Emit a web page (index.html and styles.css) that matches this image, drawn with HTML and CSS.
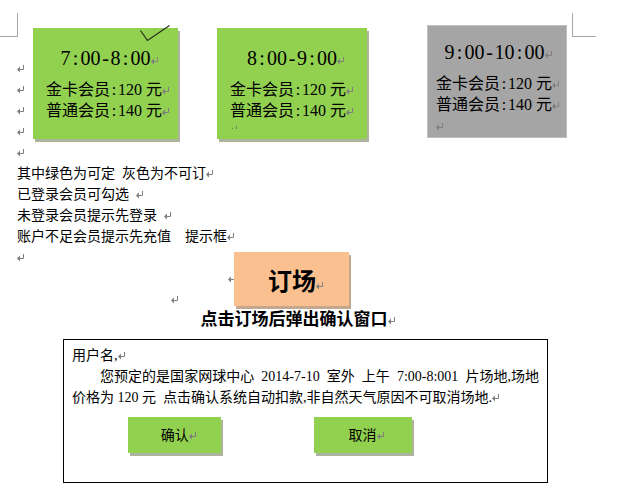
FILE: index.html
```html
<!DOCTYPE html>
<html lang="zh-CN">
<head>
<meta charset="utf-8">
<meta name="viewport" content="width=device-width, initial-scale=1">
<title>订场</title>
<link rel="stylesheet" href="styles.css">
</head>
<body>
<svg class="defs" aria-hidden="true">
  <symbol id="ret" viewBox="0 0 8 8"><path d="M6.5 0V4.5H1" fill="none" stroke="currentColor"/><path d="M0 4.5L3 1.5V7.5Z" fill="currentColor"/></symbol>
</svg>
<main class="page">
  <span class="corner corner-left"></span>
  <span class="corner corner-right"></span>

  <section class="slots">
    <div class="marks">
      <svg class="ret"><use href="#ret"/></svg>
      <svg class="ret"><use href="#ret"/></svg>
      <svg class="ret"><use href="#ret"/></svg>
      <svg class="ret"><use href="#ret"/></svg>
      <svg class="ret"><use href="#ret"/></svg>
    </div>
    <button type="button" class="slot slot-first" aria-pressed="true">
      <svg class="tick" viewBox="0 0 32 18"><path d="M1.5 5.5L8.5 15.5L30.5 0.5" fill="none" stroke="#262e1c" stroke-width="1.2"/></svg>
      <span class="time">7<i>:</i>00<i>-</i>8<i>:</i>00<svg class="ret"><use href="#ret"/></svg></span>
      <span class="price">金卡会员<i>:</i>120 元<svg class="ret"><use href="#ret"/></svg></span>
      <span class="price">普通会员<i>:</i>140 元<svg class="ret"><use href="#ret"/></svg></span>
    </button>
    <button type="button" class="slot slot-second" aria-pressed="false">
      <span class="time">8<i>:</i>00<i>-</i>9<i>:</i>00<svg class="ret"><use href="#ret"/></svg></span>
      <span class="price">金卡会员<i>:</i>120 元<svg class="ret"><use href="#ret"/></svg></span>
      <span class="price">普通会员<i>:</i>140 元<svg class="ret"><use href="#ret"/></svg></span>
      <svg class="clipped" viewBox="0 0 6 3"><path d="M0 2h1v1H0zM4 0h1v3H4z" fill="#6f8a52"/></svg>
    </button>
    <button type="button" class="slot slot-third" disabled>
      <span class="time">9<i>:</i>00<i>-</i>10<i>:</i>00<svg class="ret"><use href="#ret"/></svg></span>
      <span class="price">金卡会员<i>:</i>120 元<svg class="ret"><use href="#ret"/></svg></span>
      <span class="price">普通会员<i>:</i>140 元<svg class="ret"><use href="#ret"/></svg></span>
      <span class="price"><svg class="ret"><use href="#ret"/></svg></span>
    </button>
  </section>

  <section class="notes">
    <p>其中绿色为可定&nbsp; 灰色为不可订<svg class="ret"><use href="#ret"/></svg></p>
    <p>已登录会员可勾选&nbsp; <svg class="ret"><use href="#ret"/></svg></p>
    <p>未登录会员提示先登录&nbsp; <svg class="ret"><use href="#ret"/></svg></p>
    <p>账户不足会员提示先充值&nbsp;&nbsp;&nbsp; 提示框<svg class="ret"><use href="#ret"/></svg></p>
  </section>

  <section class="booking">
    <div class="booking-marks">
      <p><svg class="ret"><use href="#ret"/></svg></p>
      <p class="to-end"><svg class="ret-cut" viewBox="0 0 6 8"><path d="M6 4.5H1" stroke="currentColor"/><path d="M0 4.5L3 1.5V7.5Z" fill="currentColor"/></svg></p>
      <p class="inset"><svg class="ret"><use href="#ret"/></svg></p>
    </div>
    <button type="button" class="book">订场<svg class="ret"><use href="#ret"/></svg></button>
  </section>
  <h2 class="caption">点击订场后弹出确认窗口<svg class="ret"><use href="#ret"/></svg></h2>

  <section class="dialog" role="dialog" aria-label="确认">
    <p>用户名,<svg class="ret"><use href="#ret"/></svg></p>
    <p class="message">您预定的是国家网球中心&nbsp; 2014-7-10&nbsp; 室外&nbsp; 上午&nbsp; 7:00-8:001&nbsp; 片场地,场地价格为 120 元&nbsp; 点击确认系统自动扣款,非自然天气原因不可取消场地.<svg class="ret"><use href="#ret"/></svg></p>
    <div class="actions">
      <button type="button" class="confirm">确认<svg class="ret"><use href="#ret"/></svg></button>
      <button type="button" class="cancel">取消<svg class="ret"><use href="#ret"/></svg></button>
    </div>
  </section>
</main>
</body>
</html>
```
FILE: styles.css
```css
* { box-sizing: border-box; }
body {
  margin: 0;
  background: #fff;
  color: #000;
  font: 400 14px/21px "Liberation Serif", "Noto Sans CJK SC", serif;
}
p, h2 { margin: 0; }
button {
  border: 0;
  padding: 0;
  color: #000;
  font: inherit;
  text-align: center;
}
.defs { position: absolute; width: 0; height: 0; }
.ret { width: 8px; height: 8px; color: #7f7f7f; }
.ret-cut { width: 6px; height: 8px; color: #7f7f7f; }

.page { position: relative; padding: 25px 58px 6px 17px; }
.corner {
  position: absolute;
  top: 13px;
  width: 24px;
  height: 24px;
  border-bottom: 1px solid #a6a6a6;
}
.corner-left { left: 0; width: 18px; border-right: 1px solid #a6a6a6; }
.corner-right { right: 29px; border-left: 1px solid #a6a6a6; }

.slots {
  display: grid;
  grid-template-columns: 16px 145fr 39fr 150fr 60fr 140fr;
  align-items: start;
}
.marks {
  display: grid;
  grid-auto-rows: 21px;
  align-items: center;
  padding-top: 33px;
}
.slot {
  display: flex;
  flex-direction: column;
  position: relative;
  min-height: 111px;
  margin-top: 3px;
  padding: 18px 5px 0 13px;
  background: #92d050;
  box-shadow: 2px 3px 0 #adb39f;
  font-size: 16px;
  white-space: nowrap;
}
.slot-second { grid-column: 4; }
.slot-third {
  grid-column: 6;
  min-height: 113px;
  margin-top: 0;
  padding: 14px 5px 0 8px;
  border: 1px solid #bfbfbf;
  background: #a5a5a5;
  box-shadow: none;
}
.slot i {
  display: inline-block;
  width: 0.5em;
  font-style: normal;
  text-align: center;
}
.time {
  align-self: stretch;
  margin-bottom: 9px;
  font-size: 20px;
  line-height: 24px;
}
.price { align-self: flex-start; }
.tick {
  position: absolute;
  top: -3px;
  right: 7px;
  width: 32px;
  height: 18px;
}
.clipped { width: 6px; height: 3px; margin: 5px 0 0 2px; }

.booking {
  display: grid;
  grid-template-columns: 217fr 115fr 218fr;
  align-items: start;
}
.to-end { text-align: right; }
.inset { padding-left: 71%; }
.book {
  min-height: 54px;
  margin-top: 5px;
  padding: 6px 0 0 9px;
  background: #fac090;
  box-shadow: 2px 3px 0 #c3a78f;
  font-size: 24px;
  font-weight: 700;
  line-height: 36px;
}
.caption {
  padding-left: 12px;
  font-size: 17px;
  font-weight: 700;
  line-height: 20px;
  text-align: center;
}

.dialog {
  margin: 9px 19px 0 46px;
  min-height: 144px;
  padding: 5px 8px 28px;
  border: 1px solid #000;
}
.message { text-indent: 28px; text-align: justify; }
.actions {
  display: grid;
  grid-template-columns: 56fr 93fr 92fr 98fr 127fr;
  padding-top: 9px;
}
.actions button {
  min-height: 36px;
  padding-left: 8px;
  background: #92d050;
  box-shadow: 2px 3px 0 #adb39f;
}
.confirm { grid-column: 2; }
.cancel { grid-column: 4; }
```
